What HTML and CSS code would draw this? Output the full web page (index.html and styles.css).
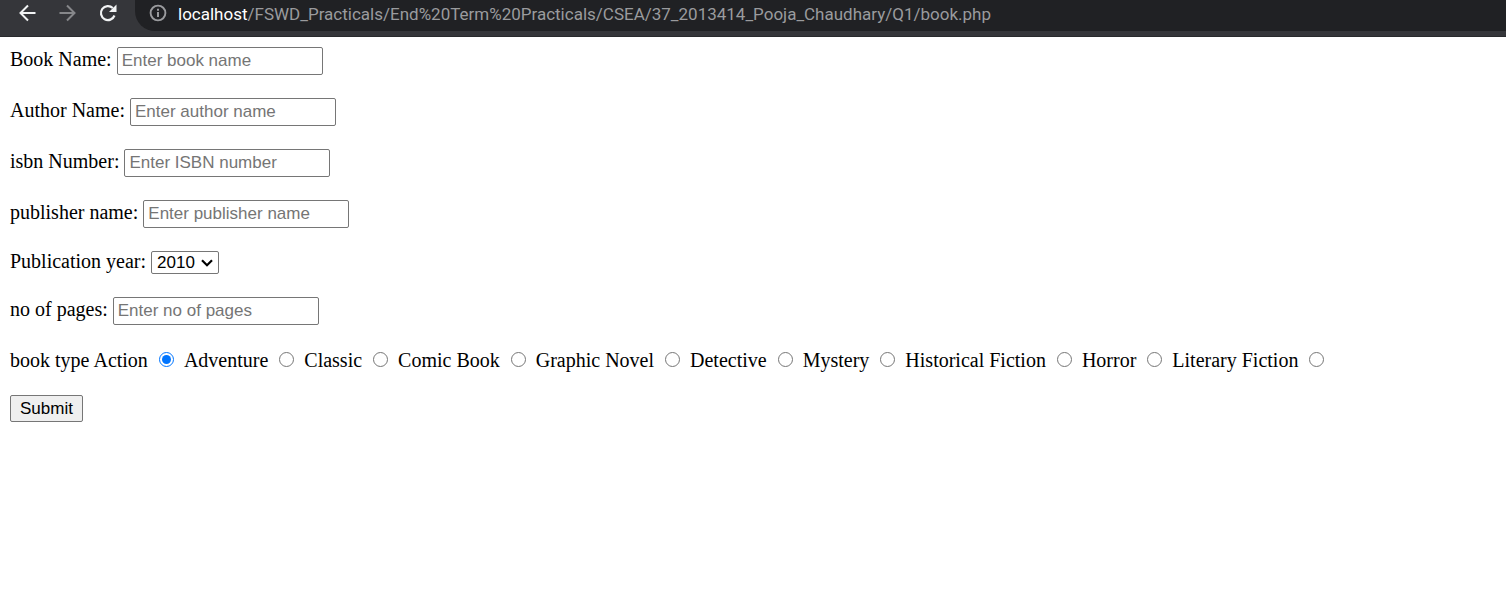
FILE: index.html
```html
<!DOCTYPE html>
<html lang="en">
<head>
<meta charset="utf-8">
<title>Book</title>
<link rel="stylesheet" href="styles.css">
</head>
<body>
<header class="toolbar">
  <nav class="nav-buttons" aria-label="Browser navigation">
    <button class="nav-button" type="button" aria-label="Back">
      <svg width="18" height="18" viewBox="0 0 18 18"><path d="M16.500 9H2M9 1.500L1.500 9l7.500 7.500" fill="none" stroke="currentColor" stroke-width="2"/></svg>
    </button>
    <button class="nav-button nav-button-off" type="button" aria-label="Forward" disabled>
      <svg width="18" height="18" viewBox="0 0 18 18"><path d="M0.500 9H15M8 1.500L15.500 9l-7.500 7.500" fill="none" stroke="currentColor" stroke-width="2"/></svg>
    </button>
    <button class="nav-button" type="button" aria-label="Reload">
      <svg width="18" height="18" viewBox="0 0 18 18"><path d="M15.500 11.500A7 7 0 1 1 13.800 4" fill="none" stroke="currentColor" stroke-width="2.200"/><path d="M17.500 0.500v7.500h-7.500z" fill="currentColor"/></svg>
    </button>
  </nav>
  <div class="address">
    <svg class="info" width="18" height="18" viewBox="0 0 18 18"><circle cx="9" cy="9" r="7.400" fill="none" stroke="currentColor" stroke-width="1.900"/><path d="M8 8h2v5H8zM8 4.800h2v2H8z" fill="currentColor"/></svg>
    <span class="url"><span class="host">localhost</span>/FSWD_Practicals/End%20Term%20Practicals/CSEA/37_2013414_Pooja_Chaudhary/Q1/book.php</span>
  </div>
</header>
<form class="book-form">
  <div class="row"><label for="book">Book Name:</label><input class="field" id="book" type="text" placeholder="Enter book name"></div>
  <div class="row"><label for="author">Author Name:</label><input class="field" id="author" type="text" placeholder="Enter author name"></div>
  <div class="row"><label for="isbn">isbn Number:</label><input class="field" id="isbn" type="text" placeholder="Enter ISBN number"></div>
  <div class="row"><label for="publisher">publisher name:</label><input class="field" id="publisher" type="text" placeholder="Enter publisher name"></div>
  <div class="row"><label for="year">Publication year:</label>
    <span class="select-wrap">
      <select class="year" id="year"><option>2010</option></select>
      <svg class="chevron" width="12" height="8" viewBox="0 0 12 8"><path d="M1 1.200l5 5 5-5" fill="none" stroke="currentColor" stroke-width="2.200"/></svg>
    </span>
  </div>
  <div class="row"><label for="pages">no of pages:</label><input class="field" id="pages" type="text" placeholder="Enter no of pages"></div>
  <div class="row types" role="radiogroup" aria-labelledby="type-label">
    <span id="type-label">book type</span>
    <label class="type">Action <input class="radio" type="radio" name="type" checked></label>
    <label class="type">Adventure <input class="radio" type="radio" name="type"></label>
    <label class="type">Classic <input class="radio" type="radio" name="type"></label>
    <label class="type">Comic Book <input class="radio" type="radio" name="type"></label>
    <label class="type">Graphic Novel <input class="radio" type="radio" name="type"></label>
    <label class="type">Detective <input class="radio" type="radio" name="type"></label>
    <label class="type">Mystery <input class="radio" type="radio" name="type"></label>
    <label class="type">Historical Fiction <input class="radio" type="radio" name="type"></label>
    <label class="type">Horror <input class="radio" type="radio" name="type"></label>
    <label class="type">Literary Fiction <input class="radio" type="radio" name="type"></label>
  </div>
  <button class="submit" type="submit">Submit</button>
</form>
</body>
</html>
```
FILE: styles.css
```css
* {
  box-sizing: border-box;
}

body {
  margin: 0;
  background: #fff;
  color: #000;
  font: 20px/18px "Liberation Serif", "Times New Roman", serif;
}

.toolbar {
  display: flex;
  padding-bottom: 5px;
  background: #35363a;
  border-bottom: 1px solid #292a2d;
}

.nav-buttons {
  display: flex;
  gap: 22px;
  padding: 4px 18px 4px 19px;
}

.nav-button {
  display: flex;
  padding: 0;
  border: 0;
  background: none;
  color: #f1f3f4;
}

.nav-button-off {
  color: #86878a;
}

.address {
  display: flex;
  flex: 1;
  align-items: flex-start;
  gap: 11px;
  min-width: 0;
  padding: 2px 14px 5px;
  background: #202124;
  border-bottom-left-radius: 20px;
  color: #9a9b9e;
}

.info {
  flex: none;
  margin-top: 2px;
}

.url {
  font: 17px/24px Roboto, "Open Sans", sans-serif;
  white-space: nowrap;
}

.host {
  color: #fff;
}

.book-form {
  display: flex;
  flex-direction: column;
  align-items: flex-start;
  gap: 23px;
  padding: 10px;
}

.row {
  display: flex;
  align-items: baseline;
  gap: 5px;
}

.field,
.year,
.submit {
  border: 1px solid #767676;
  border-radius: 2px;
  font: 17px/20px "Liberation Sans", Arial, sans-serif;
  color: #000;
}

.field {
  width: 206px;
  height: 28px;
  padding: 0 4px;
  background: #fff;
}

.field::placeholder {
  color: #757575;
}

.select-wrap {
  display: inline-grid;
  align-items: center;
}

.year {
  grid-area: 1 / 1;
  width: 68px;
  height: 23px;
  padding: 0 5px;
  background: #fff;
  appearance: none;
}

.chevron {
  grid-area: 1 / 1;
  justify-self: end;
  margin-right: 6px;
  pointer-events: none;
}

.types {
  flex-wrap: wrap;
  gap: 4px;
  line-height: 24px;
}

.type {
  white-space: nowrap;
}

.radio {
  width: 15px;
  height: 15px;
  margin: 0 6px 1px 6px;
}

.submit {
  height: 27px;
  padding: 0 9px;
  background: #efefef;
}
```
